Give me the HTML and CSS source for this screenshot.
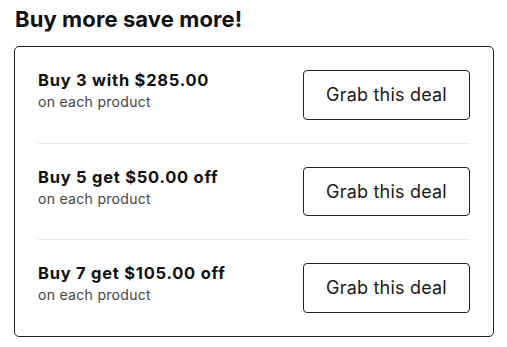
FILE: index.html
```html
<!DOCTYPE html>
<html>
<head>
<meta charset="utf-8">
<link rel="stylesheet" href="styles.css">
</head>
<body>
<h2 class="title">Buy more save more!</h2>
<div class="card">
  <div class="row">
    <div class="info">
      <div class="deal">Buy 3 with $285.00</div>
      <div class="sub">on each product</div>
    </div>
    <button class="btn">Grab this deal</button>
  </div>
  <div class="row">
    <div class="info">
      <div class="deal">Buy 5 get $50.00 off</div>
      <div class="sub">on each product</div>
    </div>
    <button class="btn">Grab this deal</button>
  </div>
  <div class="row">
    <div class="info">
      <div class="deal">Buy 7 get $105.00 off</div>
      <div class="sub">on each product</div>
    </div>
    <button class="btn">Grab this deal</button>
  </div>
</div>
</body>
</html>
```
FILE: styles.css
```css
* { box-sizing: border-box; }
html, body { margin: 0; background: #fff; }
body {
  padding: 4px 14px 0 14px;
  font-family: Inter, "Noto Sans", sans-serif;
  color: #111;
}
.title {
  margin: 0 0 12px 1px;
  font-size: 22px;
  font-weight: 700;
  line-height: 30px;
  letter-spacing: 0.1px;
  color: #111;
}
.card {
  width: 480px;
  border: 1px solid #222;
  border-radius: 5px;
  padding: 0 23px;
}
.row {
  display: flex;
  align-items: flex-start;
  justify-content: space-between;
  padding: 23px 0;
  border-top: 1px solid #e8e8e8;
}
.row:first-child { border-top: none; }
.deal {
  font-size: 16.5px;
  font-weight: 700;
  line-height: 20px;
  letter-spacing: 0.75px;
  color: #111;
}
.sub {
  margin-top: 3px;
  font-size: 14px;
  line-height: 18px;
  letter-spacing: 0.3px;
  color: #444;
}
.btn {
  width: 167px;
  height: 49.5px;
  border: 1px solid #222;
  border-radius: 4px;
  background: #fff;
  font-family: Inter, "Noto Sans", sans-serif;
  font-size: 18px;
  letter-spacing: 0.2px;
  color: #1a1a1a;
  padding: 0;
}
```
